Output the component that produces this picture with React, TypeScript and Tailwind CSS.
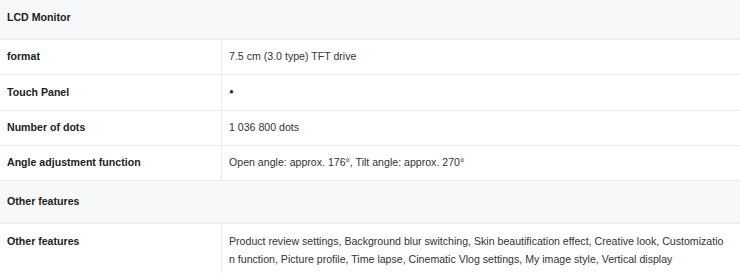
import React from 'react';

interface SpecRow {
    label: string;
    value: string;
}

interface SpecGroup {
    title: string;
    rows: SpecRow[];
}

const groups: SpecGroup[] = [
    {
        title: 'LCD Monitor',
        rows: [
            { label: 'format', value: '7.5 cm (3.0 type) TFT drive' },
            { label: 'Touch Panel', value: '●' },
            { label: 'Number of dots', value: '1 036 800 dots' },
            { label: 'Angle adjustment function', value: 'Open angle: approx. 176°, Tilt angle: approx. 270°' },
        ],
    },
    {
        title: 'Other features',
        rows: [
            {
                label: 'Other features',
                value: 'Product review settings, Background blur switching, Skin beautification effect, Creative look, Customization function, Picture profile, Time lapse, Cinematic Vlog settings, My image style, Vertical display',
            },
        ],
    },
];

const App: React.FC = () => {
    return (
        <div className="w-[740px] h-[273px] overflow-hidden bg-white text-[10.6px] text-[#333] font-['Liberation_Sans',Arial,sans-serif]">
            <div className="-mt-[3px]">
                {groups.map((group) => (
                    <div key={group.title}>
                        <div className="h-[43px] flex items-center px-[7px] bg-[#f7f8fa] border-b border-[#e9eaec] font-bold text-[#222]">
                            {group.title}
                        </div>
                        {group.rows.map((row) => {
                            const long = row.value.length > 80;
                            return (
                                <div key={row.label} className={`flex border-b border-[#e9eaec] ${long ? 'min-h-[35px]' : 'h-[35.3px]'}`}>
                                    <div className={`w-[222px] shrink-0 border-r border-[#e9eaec] px-[7px] font-bold text-[#222] ${long ? 'pt-[8px] leading-[18px]' : 'flex items-center'}`}>
                                        {row.label}
                                    </div>
                                    <div className={`flex-1 pl-[7px] pr-[14px] ${long ? 'py-[8px] leading-[18px] break-all' : 'flex items-center'}`}>
                                        {row.value === '●' ? <span className="text-[8px]">●</span> : row.value}
                                    </div>
                                </div>
                            );
                        })}
                    </div>
                ))}
            </div>
        </div>
    );
};

export default App;
